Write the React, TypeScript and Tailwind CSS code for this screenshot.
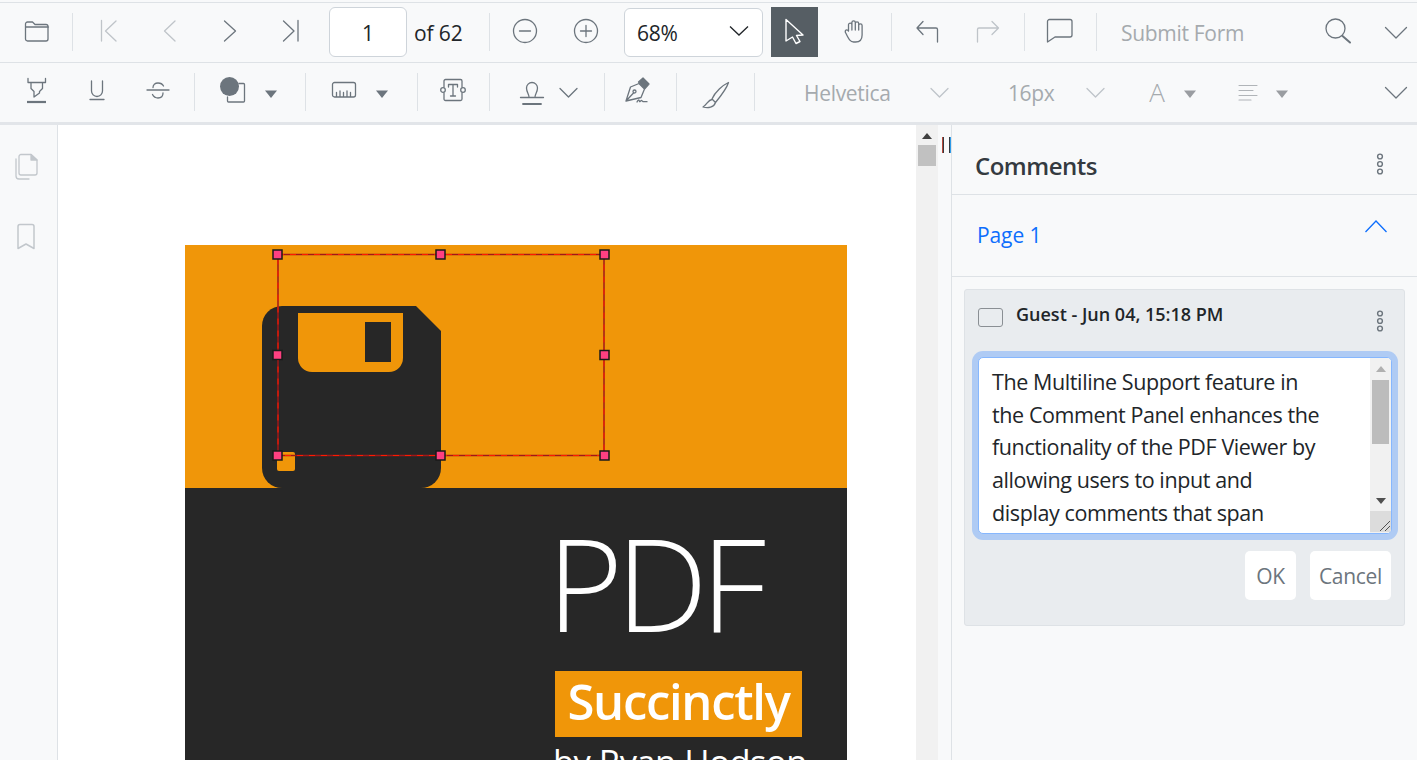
import React from "react";

const active = "text-[#6c757d]";
const muted = "text-[#bfc4c9]";

// 28px box that every toolbar icon is drawn in
const Icon = ({ d, color = active, sw = 1.3, extra }: { d?: string; color?: string; sw?: number; extra?: React.ReactNode }) => (
  <svg width="28" height="28" viewBox="0 0 28 28" fill="none" stroke="currentColor" strokeWidth={sw} strokeLinecap="round" strokeLinejoin="round" className={`shrink-0 overflow-visible ${color}`}>
    {d && <path d={d} />}
    {extra}
  </svg>
);

const Sep = ({ className = "" }: { className?: string }) => <div className={`w-px h-[38px] shrink-0 bg-[#dee2e6] ${className}`} />;

const Caret = ({ className = "", color = "text-[#6c757d]" }: { className?: string; color?: string }) => (
  <svg width="12" height="28" viewBox="0 0 12 28" className={`shrink-0 ${color} ${className}`}>
    <path d="M0 12.5H12L6 20z" fill="currentColor" />
  </svg>
);

const Dots = () => (
  <svg width="10" height="24" viewBox="0 0 10 24" fill="none" stroke="#6c757d" strokeWidth="1.4">
    <circle cx="5" cy="4.5" r="2.4" />
    <circle cx="5" cy="12" r="2.4" />
    <circle cx="5" cy="19.5" r="2.4" />
  </svg>
);

const chevron = "M3.5 9.5L14 20L24.5 9.5";
const smallChevron = "M6 10.5L14.5 19L23 10.5";

const TopBar = () => (
  <div className="flex items-center h-[60px] pb-px border-b border-[#dee2e6]">
    <div className="ml-[23px]"><Icon d="M2.5 9V6a2 2 0 0 1 2-2h5l2.5 2.5h11a2 2 0 0 1 2 2V21a2 2 0 0 1-2 2H4.5a2 2 0 0 1-2-2zM2.5 9H25.5" /></div>
    <Sep className="ml-[21px]" />
    <div className="ml-[21px]"><Icon color={muted} d="M22 3L11.5 13L22 23M7.5 2.5V23" /></div>
    <div className="ml-[33px]"><Icon color={muted} d="M20 3L9.5 13L20 23" /></div>
    <div className="ml-[33px]"><Icon d="M8.5 3L19.5 13L8.5 23" /></div>
    <div className="ml-[33px]"><Icon d="M6.5 3L17 13L6.5 23M21 2.5V23" /></div>
    <div className="ml-[24px] w-[78px] h-[50px] pt-[3px] bg-white border border-[#ced4da] rounded-[6px] flex items-center justify-center text-[21px] text-[#212529]">1</div>
    <div className="ml-[7px] mt-[4px] w-[75px] text-[21px] tracking-[-0.1px] text-[#212529]">of 62</div>
    <Sep />
    <div className="ml-[21px]"><Icon extra={<><circle cx="14" cy="13" r="11.5" /><path d="M8.5 13H19.5" /></>} /></div>
    <div className="ml-[33px]"><Icon extra={<><circle cx="14" cy="13" r="11.5" /><path d="M8.5 13H19.5M14 7.5V18.5" /></>} /></div>
    <div className="ml-[24px] w-[139px] h-[49px] pt-[3px] bg-white border border-[#ced4da] rounded-[6px] flex items-center justify-between pl-[12px] pr-[9px] text-[21px] tracking-[-0.3px] text-[#212529]">
      <span>68%</span>
      <svg width="28" height="28" viewBox="0 0 28 28" fill="none" stroke="#212529" strokeWidth="1.3" className="-mt-[6px]"><path d="M5 9.5L14 18L23 9.5" /></svg>
    </div>
    <div className="ml-[8px] w-[47px] h-[50px] bg-[#565e64] flex items-center justify-center">
      <svg width="27" height="28" viewBox="0 0 27 28" fill="none" stroke="white" strokeWidth="1.4" strokeLinejoin="round"><path d="M5 1.5L22 17L15.5 17.5L19 23.5L15 25.5L11.5 19L5 23z" /></svg>
    </div>
    <div className="ml-[22px]"><Icon d="M6 15.5c-1-1.5-1-2.8 0-3.4c.9-.5 1.9 0 2.5 1V6.8a1.7 1.7 0 0 1 3.4 0V4.5a1.7 1.7 0 0 1 3.4 0v1a1.7 1.7 0 0 1 3.4 0v2a1.7 1.7 0 0 1 3.4 0V17c0 4.5-2.5 7-6.5 7h-2c-3 0-4.5-2-7.600-8.500zM11.900 6.800V12M15.300 4.500V12M18.700 5.500V12" /></div>
    <Sep className="ml-[23px]" />
    <div className="ml-[21px]"><Icon d="M10 3.500L4 10L10 16.500M4 10H23a1.500 1.500 0 0 1 1.500 1.500V24" /></div>
    <div className="ml-[33px]"><Icon color={muted} d="M18 3.500L24.500 10L18 16.500M24.500 10H5a1.500 1.500 0 0 0-1.500 1.500V24" /></div>
    <Sep className="ml-[22px]" />
    <div className="ml-[21px]"><Icon d="M3.500 1.500H24a2 2 0 0 1 2 2V17a2 2 0 0 1-2 2H9L1.500 24V3.500a2 2 0 0 1 2-2z" /></div>
    <Sep className="ml-[22px]" />
    <div className="ml-[24px] mt-[4px] w-[124px] text-[21px] tracking-[-0.3px] whitespace-nowrap text-[#a5aaae]">Submit Form</div>
    <div className="ml-auto"><Icon extra={<><circle cx="11.500" cy="10.500" r="9.500" /><path d="M18.500 18L26 24.500" strokeWidth="2" /></>} /></div>
    <div className="ml-[30px] mr-[7px]"><Icon d={chevron} /></div>
  </div>
);

const FormatBar = () => (
  <div className="flex items-center h-[59px] pb-px">
    <div className="ml-[23px]"><Icon extra={<><path d="M5 .5V4.500H22.500V.5M8 5V10.500L11 13.500V19L16.500 15V13.500L19.500 10.500V5" /><path d="M4 24H23" strokeWidth="2.200" strokeLinecap="butt" /></>} /></div>
    <div className="ml-[32px]"><Icon d="M8.500 3V13a5.500 5.500 0 0 0 11 0V3M7 21.500H21" /></div>
    <div className="ml-[33px]"><Icon d="M19.500 8C18.500 6 16 5 14 5C11 5 9 7 9 9.500M19 15C19 18 17 20 14 20C11.500 20 9.500 18.500 8.500 16.500M3 12H25" /></div>
    <Sep className="ml-[22px]" />
    <div className="ml-[24px]"><Icon extra={<><path d="M20 5.500h4.500a1 1 0 0 1 1 1V23a1 1 0 0 1-1 1H9.500a1 1 0 0 1-1-1v-4" /><circle cx="10.500" cy="8.500" r="9.500" fill="currentColor" stroke="none" /></>} /></div>
    <Caret className="ml-[18px]" />
    <Sep className="ml-[28px]" />
    <div className="ml-[24px]"><Icon d="M4.500 4.500H23.500a2 2 0 0 1 2 2V17a2 2 0 0 1-2 2H4.500a2 2 0 0 1-2-2V6.500a2 2 0 0 1 2-2zM6.500 18.500V14.500M10 18.500V13M13.500 18.500V14.500M17 18.500V13M20.500 18.500V14.500" /></div>
    <Caret className="ml-[18px]" />
    <Sep className="ml-[29px]" />
    <div className="ml-[21px]"><Icon extra={<><path d="M5 9V3a1.500 1.500 0 0 1 1.500-1.500H21.500A1.500 1.500 0 0 1 23 3V9M23 15V21a1.500 1.500 0 0 1-1.500 1.500H6.500A1.500 1.500 0 0 1 5 21V15M9.500 9V6.500H18.500V9M14 6.500V18M11.500 18H16.500" /><circle cx="4" cy="12" r="2.300" /><circle cx="24" cy="12" r="2.300" /></>} /></div>
    <Sep className="ml-[22px]" />
    <div className="ml-[28px]"><Icon extra={<><path d="M11 19c0-3-2.500-5-2.500-9a5.500 5.500 0 0 1 11 0c0 4-2.500 6-2.500 9M2.500 19.500H25.500" /><path d="M5 26H23" strokeWidth="1.800" /></>} /></div>
    <div className="ml-[8px]"><Icon d={smallChevron} /></div>
    <Sep className="ml-[22px]" />
    <div className="ml-[19px]"><Icon extra={<><path d="M2 23L6.500 9L15 5.500L20.500 11L17 19.500zM2 23L9.500 15" /><circle cx="10.500" cy="13.500" r="1.500" /><path d="M14.500 4L19 0L25 6L21 10.500z" fill="currentColor" /><path d="M13 24c1-2.500 2-2.500 2.500-.7c.5 1.500 1.500-2 2.500-.5c.8 1.200 2 .9 5 .9" /></>} /></div>
    <Sep className="ml-[24px]" />
    <div className="ml-[24px]"><Icon d="M27.500 4.500C22 7 14 14 11 21L14.500 24.500C19 19 25.500 11 27.500 4.500zM11 21.500C7 22 6.500 26 2 29C7 30.500 13 29.500 14.500 24.500" /></div>
    <Sep className="ml-[25px]" />
    <div className="ml-[49px] mt-[4px] w-[87px] text-[21px] tracking-[-0.3px] text-[#a5aaae]">Helvetica</div>
    <div className="ml-[34px]"><Icon color={muted} d={smallChevron} /></div>
    <div className="ml-[55px] mt-[4px] w-[46px] text-[21px] tracking-[-0.4px] text-[#a5aaae]">16px</div>
    <div className="ml-[27px]"><Icon color={muted} d={smallChevron} /></div>
    <div className="ml-[34px] w-[28px] text-center text-[26px] font-light text-[#a5aaae]">A</div>
    <Caret className="ml-[13px]" color="text-[#9a9da1]" />
    <div className="ml-[38px]"><Icon color="text-[#b0b4b8]" d="M5 7.500H23M5 12.500H19M5 17.500H23M5 22H17" sw={1.100} /></div>
    <Caret className="ml-[14px]" color="text-[#9a9da1]" />
    <div className="ml-auto mr-[7px]"><Icon d={chevron} /></div>
  </div>
);

const Rail = () => (
  <div className="w-[58px] shrink-0 border-r border-[#dee2e6] pt-[28px] pl-[12px] flex flex-col gap-[42px]">
    <Icon color="text-[#c2c7cc]" extra={<><path d="M9 1.500H19L25 7V20a2 2 0 0 1-2 2H9a2 2 0 0 1-2-2V3.500a2 2 0 0 1 2-2zM4 6V23a3 3 0 0 0 3 3H17" /><path d="M19 1.500V7H25z" fill="currentColor" /></>} />
    <Icon color="text-[#c2c7cc]" sw={1.500} d="M6 25.500V3.500a2 2 0 0 1 2-2H20a2 2 0 0 1 2 2V25.500L14 21z" />
  </div>
);

const handles = [[92, 9], [255, 9], [419, 9], [92, 109.500], [419, 109.500], [92, 210], [255, 210], [419, 210]];

const Cover = () => (
  <div className="relative ml-[127px] mt-[120px] w-[662px]">
    <div className="h-[243px] bg-[#f09609]" />
    <div className="h-[400px] bg-[#272727] pl-[370px] text-white">
      <div className="text-[130px] leading-none font-light pt-[29px] -ml-[8px] tracking-[-7px] h-[183px]">PDF</div>
      <div className="w-[247px] h-[66px] bg-[#f09609] pb-[4px] flex items-center justify-center text-[49px] font-semibold tracking-[-1.3px] whitespace-nowrap">Succinctly</div>
      <div className="text-[34.500px] -mt-[1px] -ml-[2px] tracking-[-0.5px] whitespace-nowrap">by Ryan Hodson</div>
    </div>
    <svg width="662" height="245" viewBox="0 0 662 245" className="absolute top-0 left-0">
      <path d="M97 61H231L256 86V223a20 20 0 0 1-20 20H97a20 20 0 0 1-20-20V81a20 20 0 0 1 20-20z" fill="#272727" />
      <path d="M113 68H218V113a14 14 0 0 1-14 14H127a14 14 0 0 1-14-14z" fill="#f09609" />
      <rect x="180" y="77" width="26" height="40" fill="#272727" />
      <rect x="92" y="207" width="18" height="19" rx="2" fill="#f09609" />
      <rect x="93" y="9.500" width="326" height="201" fill="none" stroke="#a01818" strokeWidth="1.500" />
      <rect x="93" y="9.500" width="326" height="201" fill="none" stroke="#ff1a00" strokeWidth="1" strokeDasharray="6 6" />
      {handles.map(([x, y], i) => (
        <rect key={i} x={x - 4} y={y - 4} width="9" height="9" fill="#ff4081" stroke="#1a1a1a" strokeWidth="1.500" />
      ))}
    </svg>
  </div>
);

const PageView = () => (
  <>
    <div className="w-[858px] shrink-0 bg-white overflow-hidden">
      <Cover />
    </div>
    <div className="w-[22px] shrink-0 bg-[#f1f1f1] flex flex-col items-center">
      <svg width="12" height="8" viewBox="0 0 12 8" className="mt-[7px]"><path d="M1 7H11L6 1z" fill="#404040" /></svg>
      <div className="w-[18px] h-[21px] bg-[#c1c1c1] mt-[5px] -ml-[1px]" />
    </div>
    <div className="w-[13px] shrink-0 pt-[12px] pl-[4px]">
      <div className="flex gap-[5px]">
        <div className="w-[2px] h-[16px] bg-[#343a40] border-l border-[#b5483a]" />
        <div className="w-[2px] h-[16px] bg-[#2f9be8] border-l border-[#343a40]" />
      </div>
    </div>
  </>
);

const CommentCard = () => (
  <div className="ml-[12px] mt-[12px] w-[441px] h-[337px] bg-[#e9ecef] border border-[#dee2e6] rounded-[3px] pl-[13px] relative">
    <div className="flex items-start pt-[11px]">
      <div className="mt-[7px] w-[25px] h-[19px] border-[1.500px] border-[#8a8f94] rounded-[3px] shrink-0" />
      <div className="ml-[13px] text-[18px] font-semibold text-[#212529] whitespace-nowrap">Guest - Jun 04, 15:18 PM</div>
      <div className="ml-auto mr-[19px] mt-[8px]"><Dots /></div>
    </div>
    <div className="mt-[24px] w-[414px] h-[177px] bg-white border border-[#86b7fe] rounded-[5px] shadow-[0_0_0_6px_#afcbf4] flex overflow-hidden">
      <div className="flex-1 pl-[13px] pt-[8px] text-[21.500px] leading-[32.700px] tracking-[-0.4px] text-[#212529] whitespace-nowrap">
        <div>The Multiline Support feature in</div>
        <div>the Comment Panel enhances the</div>
        <div>functionality of the PDF Viewer by</div>
        <div>allowing users to input and</div>
        <div>display comments that span</div>
      </div>
      <div className="w-[21px] shrink-0 bg-[#f1f1f1] flex flex-col items-center">
        <svg width="10" height="7" viewBox="0 0 10 7" className="mt-[8px]"><path d="M0 6H10L5 0z" fill="#b0b0b0" /></svg>
        <div className="w-[17px] h-[64px] bg-[#bcbcbc] mt-[7px]" />
        <svg width="10" height="7" viewBox="0 0 10 7" className="mt-[54px]"><path d="M0 0H10L5 6z" fill="#505050" /></svg>
        <div className="mt-[6px] w-full h-[21px] bg-[#dcdcdc] flex items-end justify-end">
          <svg width="12" height="12" viewBox="0 0 12 12" fill="none" stroke="#505050" strokeWidth="1"><path d="M1 11L11 1M6 11L11 6" /></svg>
        </div>
      </div>
    </div>
    <div className="flex justify-end gap-[14px] mt-[17px] mr-[13px] text-[21px] tracking-[-0.3px] text-[#6c757d]">
      <div className="w-[51px] h-[49px] pt-[2px] bg-white rounded-[5px] flex items-center justify-center">OK</div>
      <div className="w-[81px] h-[49px] pt-[2px] bg-white rounded-[5px] flex items-center justify-center">Cancel</div>
    </div>
  </div>
);

const CommentsPanel = () => (
  <div className="flex-1 border-l border-[#dee2e6]">
    <div className="h-[70px] border-b border-[#dee2e6] flex items-center pl-[23px] pr-[32px] justify-between">
      <span className="text-[24px] font-semibold tracking-[-0.5px] text-[#343a40] mt-[12px]">Comments</span>
      <div className="mt-[8px]"><Dots /></div>
    </div>
    <div className="h-[82px] border-b border-[#dee2e6] flex items-center pl-[25px] pr-[29px] justify-between">
      <span className="text-[21px] tracking-[-0.1px] text-[#0d6efd]">Page 1</span>
      <svg width="24" height="14" viewBox="0 0 24 14" fill="none" stroke="#0d6efd" strokeWidth="1.300" className="-mt-[20px]"><path d="M1.500 13L12 2L22.500 13" /></svg>
    </div>
    <CommentCard />
  </div>
);

export default function App() {
  return (
    <div className="w-[1417px] h-[760px] overflow-hidden bg-[#f8f9fa] pt-[2px] font-['Open_Sans',sans-serif] flex flex-col">
      <div className="border-t border-[#dee2e6]">
        <TopBar />
        <FormatBar />
      </div>
      <div className="h-[3px] shrink-0 bg-[#e2e5e9]" />
      <div className="flex-1 flex min-h-0">
        <Rail />
        <PageView />
        <CommentsPanel />
      </div>
    </div>
  );
}
